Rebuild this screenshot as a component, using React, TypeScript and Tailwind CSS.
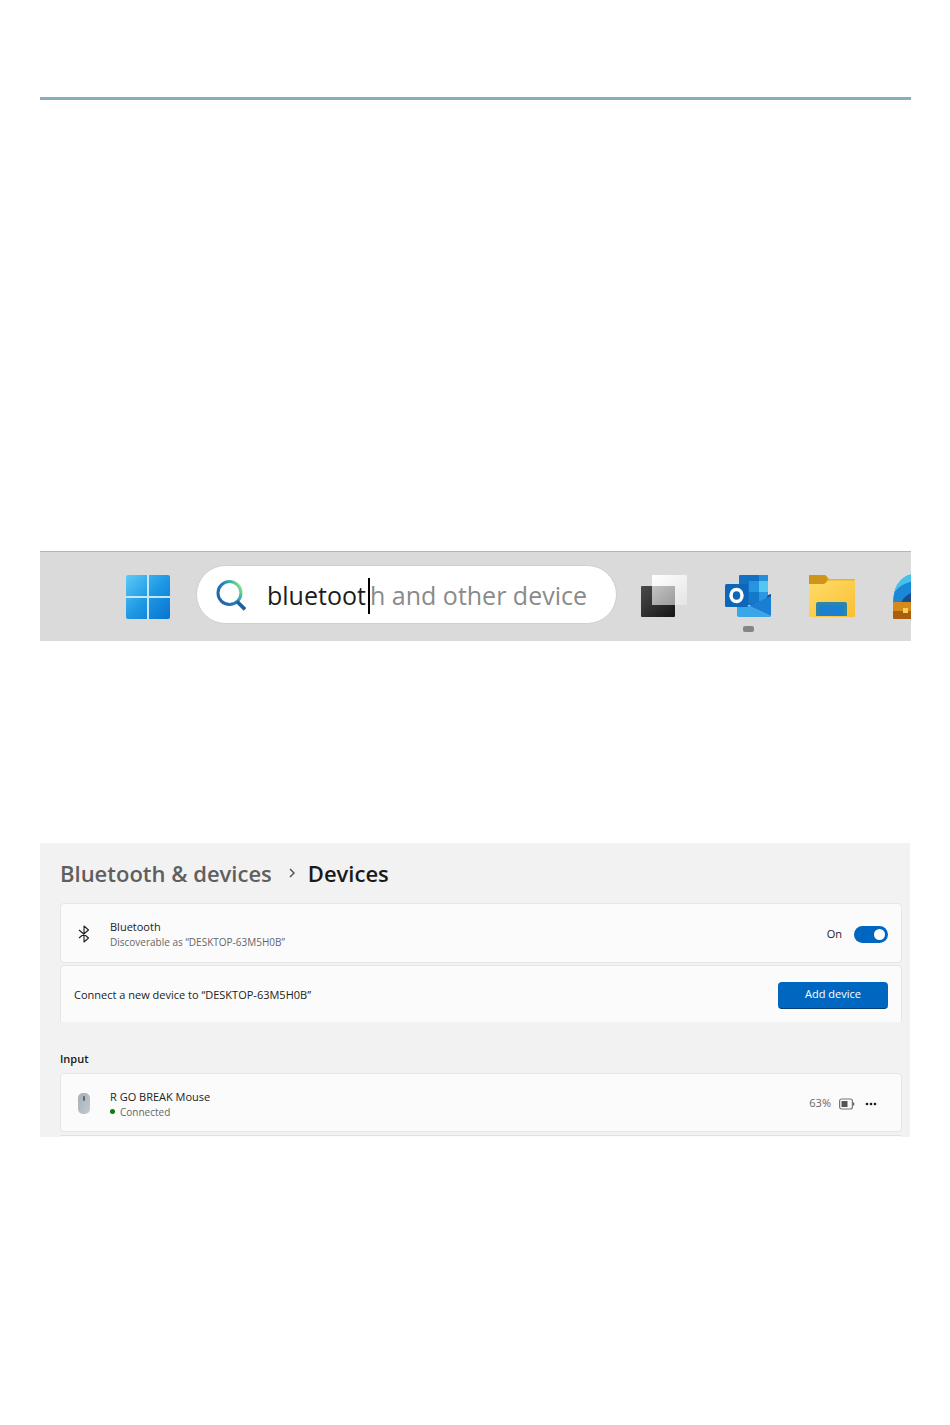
import { ReactNode, useState } from "react";

function WindowsLogo() {
  return (
    <svg viewBox="0 0 44 44" className="h-11 w-11">
      <defs>
        <linearGradient id="win" gradientUnits="userSpaceOnUse" x1="0" y1="0" x2="44" y2="44">
          <stop offset="0" stopColor="#5ccbf8" />
          <stop offset="0.5" stopColor="#1f98e4" />
          <stop offset="1" stopColor="#0873cf" />
        </linearGradient>
      </defs>
      <rect width="44" height="44" rx="2" fill="#c4e6f8" />
      <path
        fill="url(#win)"
        d="M2 0H21V21H0V2A2 2 0 0 1 2 0ZM23 0H42A2 2 0 0 1 44 2V21H23ZM0 23H21V44H2A2 2 0 0 1 0 42ZM23 23H44V42A2 2 0 0 1 42 44H23Z"
      />
    </svg>
  );
}

function SearchIcon() {
  return (
    <svg viewBox="0 0 30 31" className="h-[31px] w-[30px] shrink-0" fill="none">
      <defs>
        <linearGradient id="lens" gradientUnits="userSpaceOnUse" x1="3" y1="20" x2="24" y2="7">
          <stop offset="0" stopColor="#1f62ac" />
          <stop offset="0.5" stopColor="#2583b8" />
          <stop offset="0.8" stopColor="#3fb3a4" />
          <stop offset="1" stopColor="#7ddc8b" />
        </linearGradient>
      </defs>
      <circle cx="13.5" cy="13" r="11.5" stroke="url(#lens)" strokeWidth="3" />
      <path d="M21 21.5L29 29.500" stroke="#1f5f9f" strokeWidth="3.800" />
    </svg>
  );
}

function TaskViewIcon() {
  return (
    <svg viewBox="0 0 46 44" className="h-11 w-[46px]">
      <defs>
        <linearGradient id="tvDark" x1="0" y1="0" x2="1" y2="1">
          <stop offset="0" stopColor="#4b4b4b" />
          <stop offset="1" stopColor="#151515" />
        </linearGradient>
        <linearGradient id="tvLight" x1="0" y1="0" x2="1" y2="1">
          <stop offset="0" stopColor="#ffffff" />
          <stop offset="1" stopColor="#e4e4e4" />
        </linearGradient>
        <linearGradient id="tvMid" x1="0" y1="0" x2="1" y2="1">
          <stop offset="0" stopColor="#c2c2c2" />
          <stop offset="1" stopColor="#9b9b9b" />
        </linearGradient>
      </defs>
      <rect y="11" width="34" height="31" rx="1" fill="url(#tvDark)" />
      <rect x="11" width="35" height="30" rx="1" fill="url(#tvLight)" />
      <rect x="11" y="11" width="23" height="19" fill="url(#tvMid)" />
    </svg>
  );
}

function OutlookIcon() {
  return (
    <svg viewBox="0 0 46 44" className="h-11 w-[46px]">
      <rect x="14" width="29" height="30" rx="1" fill="#1470c2" />
      <rect x="24" y="6" width="10" height="11" fill="#2794e0" />
      <rect x="34" y="0" width="9" height="6" fill="#2490dc" />
      <rect x="34" y="6" width="9" height="11" fill="#54c6f2" />
      <rect x="24" y="17" width="10" height="11" fill="#1478cb" />
      <rect x="34" y="17" width="9" height="9" fill="#2a97e0" />
      <path d="M43 20L46 19V26L40 26Z" fill="#114f96" />
      <path d="M12 26L24 31L46 41L45 42H14A2 2 0 0 1 12 40Z" fill="#3aa6ea" />
      <path d="M46 21V41L24 31Z" fill="#1a7fd2" />
      <rect y="9" width="23" height="23" rx="1.5" fill="#0d66b7" />
      <ellipse cx="11.5" cy="20.5" rx="5.500" ry="6" fill="none" stroke="#fff" strokeWidth="3.500" />
    </svg>
  );
}

function FolderIcon() {
  return (
    <svg viewBox="0 0 46 44" className="h-11 w-[46px]">
      <defs>
        <linearGradient id="folder" x1="0" y1="0" x2="1" y2="1">
          <stop offset="0" stopColor="#ffdc6a" />
          <stop offset="1" stopColor="#f9bf33" />
        </linearGradient>
      </defs>
      <path d="M1 0H16L20 4H45A1 1 0 0 1 46 5V20H0V1A1 1 0 0 1 1 0Z" fill="#e9b325" />
      <path d="M1 0H16L19 3L16 9H0V1A1 1 0 0 1 1 0Z" fill="#cf9517" />
      <path d="M0 9H15L20 5.500H46V41A1 1 0 0 1 45 42H1A1 1 0 0 1 0 41Z" fill="url(#folder)" />
      <path d="M7 41V29A2 2 0 0 1 9 27H36A2 2 0 0 1 38 29V41Z" fill="#2c86a8" />
      <rect x="10" y="30" width="25" height="11" fill="#1c7fd0" />
    </svg>
  );
}

function EdgeIcon() {
  return (
    <svg viewBox="0 0 46 46" className="h-[46px] w-[46px]">
      <path d="M0 29C0 12 9 0 23 0S46 12 46 29Z" fill="#1c86d8" />
      <path d="M1 19C4 7 12 0 23 0V7C13 8 6 12 1 19Z" fill="#45c1ea" />
      <path d="M8 29C10 24 14 20 23 17V29Z" fill="#164f8c" />
      <rect y="28" width="46" height="17" rx="1" fill="#a95e10" />
      <rect y="28" width="46" height="9" rx="1" fill="#d68a1b" />
      <rect x="10" y="34" width="5" height="5" fill="#ffcf5a" />
    </svg>
  );
}

function BluetoothIcon() {
  return (
    <svg viewBox="0 0 12 18" className="h-[18px] w-3" fill="none" stroke="#222" strokeWidth="1.1">
      <path d="M1 5L10.500 13L6 17V1L10.500 5L1 13" strokeLinejoin="round" />
    </svg>
  );
}

function MouseIcon() {
  return (
    <svg viewBox="0 0 12 21" className="h-[21px] w-3">
      <defs>
        <linearGradient id="mouse" x1="0" y1="0" x2="1" y2="1">
          <stop offset="0" stopColor="#a4aeb4" />
          <stop offset="1" stopColor="#c2cdd2" />
        </linearGradient>
      </defs>
      <rect width="12" height="21" rx="5" fill="url(#mouse)" />
      <rect x="5" y="3" width="2" height="5" rx="1" fill="#5e676c" />
    </svg>
  );
}

function BatteryIcon() {
  return (
    <svg viewBox="0 0 16 12" className="h-3 w-4" fill="none">
      <rect x="0.6" y="1" width="12.800" height="10" rx="2" stroke="#777" strokeWidth="1.2" />
      <rect x="2.500" y="3" width="6" height="6" fill="#555" />
      <path d="M14.500 4.500V7.500" stroke="#666" strokeWidth="1.500" />
    </svg>
  );
}

function TaskbarButton({ label, running, children }: { label: string; running?: boolean; children: ReactNode }) {
  return (
    <button type="button" aria-label={label} className="relative shrink-0">
      {children}
      {running && <span className="absolute -bottom-[13px] left-[18px] h-[6px] w-[11px] rounded-xs bg-[#858585]" />}
    </button>
  );
}

function Card({ className, children }: { className: string; children: ReactNode }) {
  return (
    <div className={`flex items-center border border-[#e6e6e6] bg-[#fbfbfb] px-[13px] pt-[2px] ${className}`}>
      {children}
    </div>
  );
}

function Taskbar() {
  const [query, setQuery] = useState("bluetoot");

  return (
    <div className="flex h-[90px] items-center overflow-hidden border-t border-[#b3b5b5] bg-[#dadada] pl-[86px]">
      <TaskbarButton label="Start">
        <WindowsLogo />
      </TaskbarButton>
      <div className="mr-6 mb-1 ml-[26px] flex h-[59px] w-[421px] shrink-0 items-center rounded-full border border-[#cfcfcf] bg-white pt-[2px] pr-7 pl-[19px] text-[25px]">
        <SearchIcon />
        <div className="ml-[21px] flex min-w-0 flex-1 items-center">
          <input
            type="text"
            aria-label="Search"
            value={query}
            onChange={(e) => setQuery(e.target.value)}
            className="h-9 w-[103px] shrink-0 border-r-2 border-black text-[#1c1c1c] outline-none"
          />
          <span className="whitespace-nowrap text-[#8a8a8a]">h and other device</span>
        </div>
      </div>
      <div className="flex items-center gap-[38px]">
        <TaskbarButton label="Task view">
          <TaskViewIcon />
        </TaskbarButton>
        <TaskbarButton label="Outlook" running>
          <OutlookIcon />
        </TaskbarButton>
        <TaskbarButton label="File Explorer">
          <FolderIcon />
        </TaskbarButton>
        <TaskbarButton label="Edge">
          <EdgeIcon />
        </TaskbarButton>
      </div>
    </div>
  );
}

function DeviceSettings() {
  const [enabled, setEnabled] = useState(true);

  return (
    <section className="mr-px overflow-hidden bg-[#f2f2f2] pr-2 pl-5">
      <h1 className="flex h-[60px] items-center text-[22px] font-semibold">
        <a href="#bluetooth" className="text-[#5f5f5f]">Bluetooth &amp; devices</a>
        <svg viewBox="0 0 6 10" className="mr-[13px] ml-[17px] h-[10px] w-[6px]" fill="none" stroke="#555" strokeWidth="1.5">
          <path d="M1 1L5 5L1 9" />
        </svg>
        <span className="text-[#1a1a1a]">Devices</span>
      </h1>

      <Card className="h-[60px] rounded">
        <div className="flex w-9 pl-1">
          <BluetoothIcon />
        </div>
        <div className="flex-1">
          <label htmlFor="bt" className="block text-[11px] leading-4 text-[#222]">Bluetooth</label>
          <p className="text-[10px] leading-[14px] text-[#666]">Discoverable as “DESKTOP-63M5H0B”</p>
        </div>
        <span className="mr-3 text-[11px] text-[#222]">On</span>
        <input
          id="bt"
          type="checkbox"
          role="switch"
          checked={enabled}
          onChange={(e) => setEnabled(e.target.checked)}
          className="flex h-[17px] w-[34px] appearance-none items-center rounded-full bg-[#8a8a8a] px-[3px] before:h-[11px] before:w-[11px] before:rounded-full before:bg-white checked:justify-end checked:bg-[#0067c0]"
        />
      </Card>

      <Card className="mt-[2px] h-[57px] rounded-t border-b-0">
        <p className="flex-1 text-[11px] text-[#222]">Connect a new device to “DESKTOP-63M5H0B”</p>
        <button type="button" className="h-[27px] w-[110px] rounded border-b border-[#003e73] bg-[#0067c0] text-[11px] text-white">
          Add device
        </button>
      </Card>

      <h2 className="flex h-[51px] items-end pb-[6px] text-[11px] leading-4 font-semibold text-[#1a1a1a]">Input</h2>

      <Card className="h-[59px] rounded">
        <div className="flex w-9 pl-1">
          <MouseIcon />
        </div>
        <div className="flex-1">
          <p className="text-[11px] leading-4 text-[#222]">R GO BREAK Mouse</p>
          <p className="flex items-center text-[10px] leading-[14px] text-[#666]">
            <span className="mr-[5px] h-[5px] w-[5px] rounded-full bg-[#107c10]" />
            Connected
          </p>
        </div>
        <span className="mr-2 text-[11px] text-[#666]">63%</span>
        <BatteryIcon />
        <button type="button" aria-label="More options" className="mr-[11px] ml-[10px]">
          <svg viewBox="0 0 12 4" className="h-1 w-3" fill="#1a1a1a">
            <circle cx="2" cy="2" r="1.300" />
            <circle cx="6" cy="2" r="1.300" />
            <circle cx="10" cy="2" r="1.300" />
          </svg>
        </button>
      </Card>
      <div className="mt-[3px] h-[2px] rounded-t border-t border-[#e0e0e0] bg-[#fbfbfb]" />
    </section>
  );
}

export default function App() {
  return (
    <main className="min-h-screen bg-white pt-[97px] pr-[39px] pb-10 pl-10 font-['Open_Sans','Noto_Sans',sans-serif]">
      <hr className="h-[3px] border-0 bg-[#86adb8]" />
      <div className="mt-[451px]">
        <Taskbar />
      </div>
      <div className="mt-[202px]">
        <DeviceSettings />
      </div>
    </main>
  );
}
